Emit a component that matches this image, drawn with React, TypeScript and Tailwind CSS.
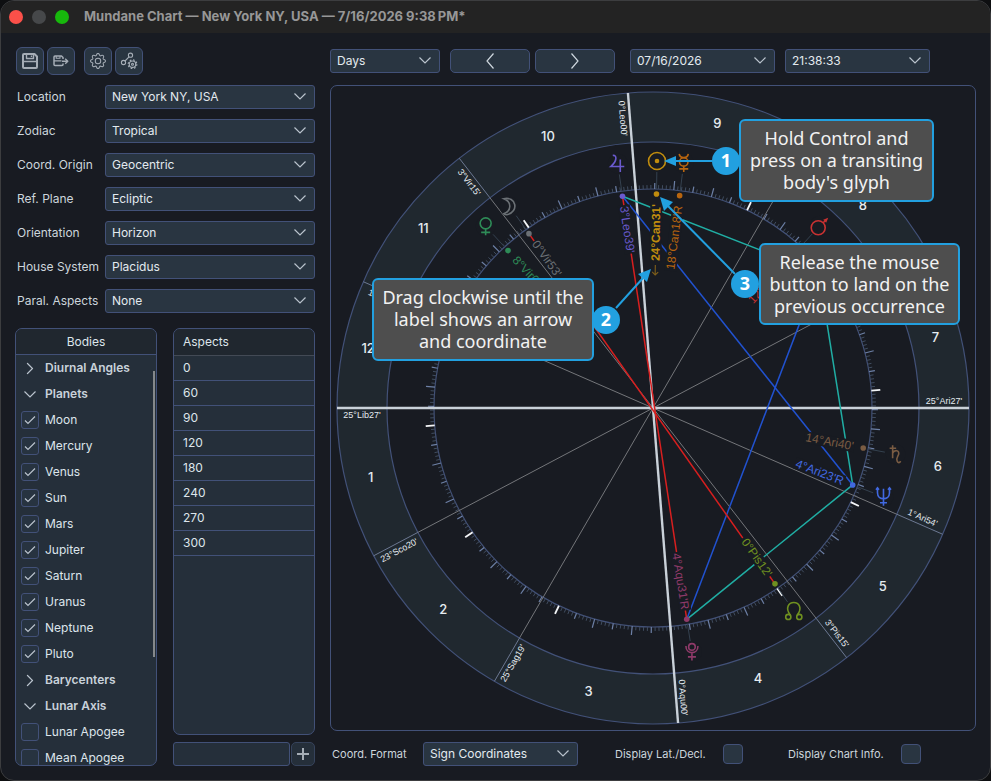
import React from "react";
import { BsGear } from "react-icons/bs";

/* ---------- shared form controls ---------- */

function Chevron({ className }: { className: string }) {
  return (
    <svg viewBox="0 0 12 7" className={className} fill="none" stroke="#b9c2cc" strokeWidth="1.2" aria-hidden="true">
      <path d="M0.5 0.5 L6 6 L11.5 0.5" />
    </svg>
  );
}

function Dropdown({ id, value, label, className }: { id: string; value: string; label?: string; className: string }) {
  return (
    <div className={`relative h-6 ${className}`}>
      <select
        id={id}
        aria-label={label}
        defaultValue={value}
        className="block h-6 w-full appearance-none rounded-[3px] border border-[#425178] bg-[#293541] pr-7 pl-[6px] text-[12px] text-[#e3eaef] outline-none"
      >
        <option>{value}</option>
      </select>
      <Chevron className="pointer-events-none absolute top-[8px] right-[9px] h-[7px] w-3" />
    </div>
  );
}

function IconButton({ label, children }: { label: string; children: React.ReactNode }) {
  return (
    <button
      type="button"
      aria-label={label}
      className="flex size-7 items-center justify-center rounded-[6px] border border-[#425178] bg-[#293541] text-[#a5adb6]"
    >
      {children}
    </button>
  );
}

/* ---------- left column ---------- */

const settings = [
  ["Location", "New York NY, USA"],
  ["Zodiac", "Tropical"],
  ["Coord. Origin", "Geocentric"],
  ["Ref. Plane", "Ecliptic"],
  ["Orientation", "Horizon"],
  ["House System", "Placidus"],
  ["Paral. Aspects", "None"],
];

type BodyRow = { name: string; kind: "closed" | "open" | "on" | "off" };

const bodyRows: BodyRow[] = [
  { name: "Diurnal Angles", kind: "closed" },
  { name: "Planets", kind: "open" },
  { name: "Moon", kind: "on" },
  { name: "Mercury", kind: "on" },
  { name: "Venus", kind: "on" },
  { name: "Sun", kind: "on" },
  { name: "Mars", kind: "on" },
  { name: "Jupiter", kind: "on" },
  { name: "Saturn", kind: "on" },
  { name: "Uranus", kind: "on" },
  { name: "Neptune", kind: "on" },
  { name: "Pluto", kind: "on" },
  { name: "Barycenters", kind: "closed" },
  { name: "Lunar Axis", kind: "open" },
  { name: "Lunar Apogee", kind: "off" },
  { name: "Mean Apogee", kind: "off" },
];

function BodyItem({ name, kind }: BodyRow) {
  if (kind === "closed" || kind === "open") {
    return (
      <li>
        <button
          type="button"
          aria-expanded={kind === "open"}
          className="flex h-[26px] w-full items-center gap-[6px] pl-[5px] text-left font-semibold text-[#c9d2da]"
        >
          <span className="flex size-[18px] items-center justify-center">
            <Chevron className={kind === "open" ? "h-[7px] w-3" : "h-[7px] w-3 -rotate-90"} />
          </span>
          {name}
        </button>
      </li>
    );
  }
  return (
    <li>
      <label className="flex h-[26px] items-center gap-[6px] pl-[5px]">
        <span className="relative flex size-[18px]">
          <input
            type="checkbox"
            defaultChecked={kind === "on"}
            className="peer size-[18px] appearance-none rounded-[3px] border border-[#425178] bg-[#273340]"
          />
          <svg
            viewBox="0 0 18 18"
            className="pointer-events-none absolute inset-0 hidden size-[18px] peer-checked:block"
            fill="none"
            stroke="#b9c2cc"
            strokeWidth="1.2"
            aria-hidden="true"
          >
            <path d="M4 9.5 L7 12.5 L14 5.5" />
          </svg>
        </span>
        {name}
      </label>
    </li>
  );
}

const aspectAngles = [0, 60, 90, 120, 180, 240, 270, 300];

function Sidebar() {
  return (
    <aside className="flex min-h-0 w-[300px] shrink-0 flex-col">
      <div className="mb-[10px] flex gap-[3px] pl-px">
        <IconButton label="Save chart">
          <svg viewBox="0 0 18 18" className="size-[18px]" fill="none" stroke="currentColor" strokeWidth="2" strokeLinejoin="round" aria-hidden="true">
            <path d="M3 2 H13.5 L16 4.5 V15 Q16 16 15 16 H3 Q2 16 2 15 V3 Q2 2 3 2 Z" />
            <path d="M2 9.5 H16" strokeWidth="1.6" />
            <path d="M5.5 2 V6.5 H12.5 V2" strokeWidth="1.4" />
            <path d="M10.5 3.5 V5" strokeWidth="1.4" />
          </svg>
        </IconButton>
        <IconButton label="Save chart as">
          <svg viewBox="0 0 18 18" className="size-[18px]" fill="none" stroke="currentColor" strokeWidth="1.5" strokeLinejoin="round" aria-hidden="true">
            <path d="M11 7 V5.5 L9.5 4 H3 Q2 4 2 5 V12.5 Q2 13.5 3 13.5 H10 Q11 13.5 11 12.5 V11.5" />
            <path d="M2 8.8 H9.5" strokeWidth="1.2" />
            <path d="M4.2 4 V6.3 H8 V4" strokeWidth="1.1" />
            <path d="M10 9.2 H15.5 M13.2 6.7 L15.8 9.2 L13.2 11.7" strokeWidth="1.4" />
          </svg>
        </IconButton>
        <div className="w-[3px]" />
        <IconButton label="Settings">
          <BsGear className="size-4" />
        </IconButton>
        <IconButton label="Aspect settings">
          <svg viewBox="0 0 18 18" className="size-[18px]" fill="none" stroke="currentColor" strokeWidth="1.1" aria-hidden="true">
            <circle cx="10.5" cy="3.2" r="2.1" />
            <circle cx="3.5" cy="10.5" r="2.1" />
            <path d="M9 4.8 L5 9" />
            <circle cx="12.5" cy="12.2" r="3.2" />
            <circle cx="12.5" cy="12.2" r="1" />
            <circle cx="12.5" cy="12.2" r="4.3" strokeDasharray="1.7 1.677" strokeWidth="1.2" />
          </svg>
        </IconButton>
      </div>

      <div className="flex flex-col gap-[10px] pl-px">
        {settings.map(([label, value], i) => (
          <div key={label} className="flex h-6 items-center">
            <label htmlFor={`setting-${i}`} className="w-[89px] shrink-0 pl-px text-[12px] text-[#ccd5dc]">
              {label}
            </label>
            <Dropdown id={`setting-${i}`} value={value} className="flex-1" />
          </div>
        ))}
      </div>

      <div className="mt-[15px] grid min-h-0 flex-1 grid-cols-2 gap-4">
        <section className="relative flex min-h-0 flex-col overflow-hidden rounded-[7px] border border-[#425178] bg-[#252f3a] text-[12px] text-[#dde5eb]">
          <h2 className="flex h-[26px] shrink-0 items-center justify-center border-b border-[#425178] bg-[#20272f] text-[12px]">Bodies</h2>
          <ul className="min-h-0 flex-1 overflow-hidden">
            {bodyRows.map((row) => (
              <BodyItem key={row.name} {...row} />
            ))}
          </ul>
          <div className="absolute top-[42px] right-px h-[286px] w-[2px] bg-[#85888a]" />
        </section>

        <div className="flex min-h-0 flex-col gap-[7px]">
          <section className="flex min-h-0 flex-1 flex-col overflow-hidden rounded-[7px] border border-[#425178] bg-[#252f3a] text-[12px] text-[#dde5eb]">
            <table className="w-full">
              <thead>
                <tr className="h-[26px] border-b border-[#434a55] bg-[#20272f]">
                  <th className="p-0 pl-[9px] text-left font-normal">Aspects</th>
                </tr>
              </thead>
              <tbody>
                {aspectAngles.map((angle) => (
                  <tr key={angle} className="h-[25px] border-b border-[#425178]">
                    <td className="p-0 pl-[9px]">{angle}</td>
                  </tr>
                ))}
              </tbody>
            </table>
          </section>
          <div className="flex gap-px">
            <input
              aria-label="New aspect angle"
              className="h-6 min-w-0 flex-1 rounded-[3px] border border-[#425178] bg-[#252f3a] px-2 text-[12px] text-[#d5dde4] outline-none"
            />
            <button
              type="button"
              aria-label="Add aspect"
              className="flex size-6 items-center justify-center rounded-[5px] border border-[#36435c] bg-[#252f3a]"
            >
              <svg viewBox="0 0 12 12" className="size-3" stroke="#a5adb6" strokeWidth="2" aria-hidden="true">
                <path d="M6 0 V12 M0 6 H12" />
              </svg>
            </button>
          </div>
        </div>
      </div>
    </aside>
  );
}

/* ---------- chart wheel (origin at its centre) ---------- */

const ASC = 205.45;
const R_OUTER = 316;
const R_RING = 266;
const R_TICK = 219;
const R_DOT = 214;

function screenAngle(lon: number) {
  return (((180 + lon - ASC) % 360) + 360) % 360;
}

function at(lon: number, r: number): [number, number] {
  const a = (screenAngle(lon) * Math.PI) / 180;
  return [r * Math.cos(a), -r * Math.sin(a)];
}

/* An empty label marks a cusp whose text is covered by a callout. */
const cusps: [number, string][] = [
  [205.45, "25°Lib27'"],
  [233.33, "23°Sco20'"],
  [265.32, "25°Sag19'"],
  [300, "0°Aqu00'"],
  [333.25, "3°Pis15'"],
  [361.9, "1°Ari54'"],
  [385.45, "25°Ari27'"],
  [413.33, ""],
  [445.32, ""],
  [480, "0°Leo00'"],
  [513.25, "3°Vir15'"],
  [541.9, "1°Lib54'"],
];

type Body = { name: string; lon: number; text: string; width: number; color: string; glyph: React.ReactNode };

const bodies: Body[] = [
  {
    name: "moon", lon: 150.88, text: "0°Vir53'", width: 44, color: "#6b7075",
    glyph: <path d="M-6 -8 C6 -11 10 5 -3 8 C-4 8 -5 8 -6 7 C2 4 2 -5 -6 -8 Z" />,
  },
  {
    name: "venus", lon: 158.1, text: "8°Vir06'", width: 44, color: "#2e8b57",
    glyph: <><circle cx="0" cy="-3" r="5.5" /><path d="M0 2.5 V9 M-4.5 6 H4.5" /></>,
  },
  {
    name: "jupiter", lon: 123.65, text: "3°Leo39'", width: 47, color: "#6a5acd",
    glyph: <path d="M-5 -8 C-1 -9 0 -3 -7 3 H6.5 M2.5 -4 V8.5" />,
  },
  {
    name: "sun", lon: 114.52, text: "24°Can31'", width: 56, color: "#c08c0e",
    glyph: <><circle cx="0" cy="0" r="8.5" /><circle cx="0" cy="0" r="1.5" fill="#c08c0e" /></>,
  },
  {
    name: "mercury", lon: 108.3, text: "18°Can18'R", width: 65, color: "#b8650f",
    glyph: <><path d="M-4.5 -9 C-4 -4 4 -4 4.5 -9 M0 3.5 V9 M-4.5 6 H4.5" /><circle cx="0" cy="-1" r="4.2" /></>,
  },
  {
    name: "mars", lon: 73, text: "12°Gem58'", width: 57, color: "#c83232",
    glyph: <><circle cx="-1.5" cy="2" r="7" /><path d="M3.5 -3 L7 -6.5" /><path d="M8.5 -8 L3.5 -6 L6.5 -3 Z" fill="#c83232" stroke="none" /></>,
  },
  {
    name: "saturn", lon: 14.67, text: "14°Ari40'", width: 49, color: "#7a5c43",
    glyph: <path d="M-3 -9 V4 M-6 -6 H0.5 M-3 -1 C-1 -5 4 -4 3 0 C2.5 2 0 4 1.5 7 C2.5 9 4 9 5 7" />,
  },
  {
    name: "neptune", lon: 4.38, text: "4°Ari23'R", width: 51, color: "#4169e1",
    glyph: <path d="M-6 -8 V-4 C-6 4 6 4 6 -4 V-8 M0 -8 V9 M-3.5 6 H3.5 M-7.5 -7 L-6 -9 L-4.5 -7 M4.5 -7 L6 -9 L7.5 -7" />,
  },
  {
    name: "pluto", lon: 304.52, text: "4°Aqu31'R", width: 57, color: "#8f3a69",
    glyph: <><circle cx="0" cy="-5" r="3.3" /><path d="M-6 -6 C-6 3 6 3 6 -6 M0 1 V8.5 M-4 5 H4" /></>,
  },
  {
    name: "node", lon: 330.2, text: "0°Pis12'", width: 45, color: "#6f9020",
    glyph: <><circle cx="-5.5" cy="6" r="2.6" /><circle cx="5.5" cy="6" r="2.6" /><path d="M-3.5 4 C-9 -3 -5 -8.5 0 -8.5 C5 -8.5 9 -3 3.5 4" /></>,
  },
];

const URANUS = 64.6;
const aspectLines: [number, number, string][] = [
  [123.65, 4.38, "#2152d0"],
  [304.52, URANUS, "#2152d0"],
  [123.65, URANUS, "#20aea4"],
  [URANUS, 4.38, "#20aea4"],
  [304.52, 4.38, "#20aea4"],
  [123.65, 304.52, "#d81f1f"],
  [150.88, 330.2, "#d81f1f"],
];

function Radial({ lon, from, to, stroke, width }: { lon: number; from: number; to: number; stroke: string; width: number }) {
  const [x1, y1] = at(lon, from);
  const [x2, y2] = at(lon, to);
  return <line x1={x1} y1={y1} x2={x2} y2={y2} stroke={stroke} strokeWidth={width} />;
}

function Ticks() {
  return (
    <g>
      {Array.from({ length: 360 }, (_, d) => {
        if (d % 30 === 0) return <Radial key={d} lon={d} from={R_TICK} to={R_TICK + 9} stroke="#f4f6f8" width={1.8} />;
        if (d % 10 === 0) return <Radial key={d} lon={d} from={R_TICK} to={R_TICK + 9} stroke="#6d80a6" width={1.2} />;
        if (d % 5 === 0) return <Radial key={d} lon={d} from={R_TICK} to={R_TICK + 6} stroke="#6d80a6" width={1.2} />;
        return <Radial key={d} lon={d} from={R_TICK} to={R_TICK + 4} stroke="#404d60" width={1} />;
      })}
    </g>
  );
}

function BodyLabel({ body }: { body: Body }) {
  const angle = screenAngle(body.lon);
  const left = angle > 90 && angle < 270;
  const turn = left ? 180 - angle : -angle;
  const start = left ? -204 : 204 - body.width;
  return (
    <g transform={`rotate(${turn})`}>
      <rect x={start - 1} y={-6} width={body.width + 2} height={12} fill="#181b22" />
      <text
        x={left ? -204 : 204}
        y={4}
        textAnchor={left ? "start" : "end"}
        fontSize="12"
        fontWeight={body.name === "sun" ? 700 : 400}
        fill={body.color}
      >
        {body.text}
      </text>
      {body.name === "sun" && (
        <path d="M143 0 H133 M136 -3 L133 0 L136 3" fill="none" stroke="#80601a" strokeWidth="1.1" />
      )}
    </g>
  );
}

function Wheel() {
  return (
    <svg
      viewBox="-322 -321 644 643"
      className="block h-[643px] w-[644px] font-['Liberation_Sans',Arial,sans-serif]"
      role="img"
      aria-label="Mundane chart wheel"
    >
      <circle r={(R_OUTER + R_RING) / 2} fill="none" stroke="#20282f" strokeWidth={R_OUTER - R_RING} />
      <circle r={R_OUTER} fill="none" stroke="#425178" strokeWidth="1.2" />
      <circle r={R_RING} fill="none" stroke="#425178" strokeWidth="1.2" />
      <circle r={R_TICK} fill="none" stroke="#425178" strokeWidth="1.2" />
      <Ticks />
      {cusps.map(([lon], i) =>
        i % 3 === 0 ? null : (
          <g key={lon}>
            <Radial lon={lon} from={0} to={R_RING} stroke="#74767a" width={1} />
            <Radial lon={lon} from={R_RING} to={R_OUTER} stroke="#6c7892" width={1} />
          </g>
        ),
      )}
      {cusps.map(([lon], i) =>
        i % 3 === 0 ? (
          <Radial key={lon} lon={lon} from={0} to={R_OUTER} stroke="#c9d1d9" width={2.4} />
        ) : null,
      )}

      {bodies.map((b) => {
        const [x, y] = at(b.lon, 247);
        return (
          <g key={b.name}>
            <Radial lon={b.lon} from={R_TICK} to={236} stroke="#34414f" width={1} />
            <g transform={`translate(${x} ${y})`} fill="none" stroke={b.color} strokeWidth="1.6">
              <circle r="10" fill="#181b22" stroke="none" />
              {b.glyph}
            </g>
          </g>
        );
      })}

      {aspectLines.map(([a, b, color], i) => {
        const [x1, y1] = at(a, R_DOT);
        const [x2, y2] = at(b, R_DOT);
        return <line key={i} x1={x1} y1={y1} x2={x2} y2={y2} stroke={color} strokeWidth="1.5" />;
      })}
      {bodies.map((b) => (
        <BodyLabel key={b.name} body={b} />
      ))}
      {bodies.map((b) => {
        const [x, y] = at(b.lon, R_DOT);
        return <circle key={b.name} cx={x} cy={y} r="2.8" fill={b.color} />;
      })}

      {cusps.map(([lon, text]) => {
        const angle = screenAngle(lon);
        const left = angle > 90 && angle < 270;
        return text ? (
          <text
            key={text}
            transform={`rotate(${left ? 180 - angle : -angle})`}
            x={left ? -291 : 291}
            y={left ? 10 : -4}
            textAnchor="middle"
            fontSize="9"
            fill="#e6ecf1"
          >
            {text}
          </text>
        ) : null;
      })}
      {cusps.map(([lon], i) => {
        const next = i === 11 ? 565.45 : cusps[i + 1][0];
        const [x, y] = at((lon + next) / 2, 291);
        return (
          <text
            key={i}
            x={x}
            y={y + 4}
            textAnchor="middle"
            className="font-['Inter',sans-serif] text-[13px] font-medium"
            fill="#e6ecf1"
          >
            {i + 1}
          </text>
        );
      })}

      <g stroke="#22a0e0" fill="#22a0e0" strokeWidth="2">
        <path d="M59 -247 H22" />
        <path d="M11 -247 L23 -252 L23 -242 Z" stroke="none" />
        <path d="M-37 -100 L-10 -130" />
        <path d="M-2 -139 L-6 -126 L-15 -134 Z" stroke="none" />
        <path d="M82 -134 L15 -202" />
        <path d="M7 -211 L20 -206 L11 -197 Z" stroke="none" />
      </g>
    </svg>
  );
}

/* ---------- tutorial callouts over the wheel ---------- */

function Badge({ n, className }: { n: number; className: string }) {
  return (
    <span
      className={`absolute flex size-7 items-center justify-center rounded-full bg-[#22a0e0] font-['Noto_Sans',sans-serif] text-[18px] font-bold text-white ${className}`}
    >
      {n}
    </span>
  );
}

function Callout({ lines, className }: { lines: string[]; className: string }) {
  return (
    <div
      className={`absolute flex flex-col items-center justify-center rounded-[6px] border-2 border-[#22a0e0] bg-[#4e4e4e] font-['Noto_Sans',sans-serif] text-[18px] leading-[22px] whitespace-nowrap text-[#f2f2f2] ${className}`}
    >
      {lines.map((line) => (
        <span key={line}>{line}</span>
      ))}
    </div>
  );
}

/* ---------- window ---------- */

export default function App() {
  return (
    <div className="h-screen bg-[#0e0f11] font-['Inter',sans-serif] text-[#d5dde4]">
      <div className="flex h-full flex-col overflow-hidden rounded-[14px] border border-[#3c3d3f] bg-[#181b22]">
        <header className="flex h-8 shrink-0 items-center bg-[#232323] pl-2">
          <div className="flex gap-[9px]">
            <button type="button" aria-label="Close" className="size-[14px] rounded-full bg-[#fb5049]" />
            <button type="button" aria-label="Minimize" className="size-[14px] rounded-full bg-[#46484a]" />
            <button type="button" aria-label="Zoom" className="size-[14px] rounded-full bg-[#17b80c]" />
          </div>
          <h1 className="ml-[15px] text-[13px] font-bold text-[#979797]">
            Mundane Chart — New York NY, USA — 7/16/2026 9:38{"\u202f"}PM*
          </h1>
        </header>

        <main className="flex min-h-0 flex-1 gap-[15px] px-[14px] pt-[14px] pb-[14px]">
          <Sidebar />

          <div className="flex min-w-0 flex-1 flex-col">
            <div className="mt-[2px] mb-3 flex">
              <Dropdown id="step" label="Time step" value="Days" className="w-[110px]" />
              <button type="button" aria-label="Previous" className="ml-[10px] flex h-6 w-20 items-center justify-center rounded-[5px] border border-[#425178] bg-[#293541]">
                <svg viewBox="0 0 8 16" className="h-4 w-2" fill="none" stroke="#ccd5dc" strokeWidth="1.2" aria-hidden="true">
                  <path d="M7.5 0.5 L1 8 L7.5 15.5" />
                </svg>
              </button>
              <button type="button" aria-label="Next" className="ml-[5px] flex h-6 w-20 items-center justify-center rounded-[5px] border border-[#425178] bg-[#293541]">
                <svg viewBox="0 0 8 16" className="h-4 w-2" fill="none" stroke="#ccd5dc" strokeWidth="1.2" aria-hidden="true">
                  <path d="M0.5 0.5 L7 8 L0.5 15.5" />
                </svg>
              </button>
              <Dropdown id="date" label="Date" value="07/16/2026" className="ml-[15px] w-[145px]" />
              <Dropdown id="time" label="Time" value="21:38:33" className="ml-[10px] w-[145px]" />
            </div>

            <section className="flex min-h-0 flex-1 items-center justify-center overflow-hidden rounded-[7px] border border-[#425178]">
              <div className="relative shrink-0">
                <Wheel />
                <Callout
                  className="top-[32px] left-[408px] h-[83px] w-[195px]"
                  lines={["Hold Control and", "press on a transiting", "body's glyph"]}
                />
                <Callout
                  className="top-[191px] left-[41px] h-[83px] w-[222px]"
                  lines={["Drag clockwise until the", "label shows an arrow", "and coordinate"]}
                />
                <Callout
                  className="top-[156px] left-[428px] h-[82px] w-[201px]"
                  lines={["Release the mouse", "button to land on the", "previous occurrence"]}
                />
                <Badge n={1} className="top-[60px] left-[381px]" />
                <Badge n={2} className="top-[219px] left-[261px]" />
                <Badge n={3} className="top-[183px] left-[400px]" />
              </div>
            </section>

            <div className="mt-[11px] flex h-6 items-center pl-[2px] text-[11px] text-[#ccd5dc]">
              <label htmlFor="format" className="w-[91px]">Coord. Format</label>
              <Dropdown id="format" value="Sign Coordinates" className="w-[155px]" />
              <label htmlFor="lat" className="ml-[37px] w-[108px]">Display Lat./Decl.</label>
              <input id="lat" type="checkbox" className="size-5 appearance-none rounded-[4px] border border-[#425178] bg-[#293541]" />
              <label htmlFor="info" className="ml-[45px] w-[113px]">Display Chart Info.</label>
              <input id="info" type="checkbox" className="size-5 appearance-none rounded-[4px] border border-[#425178] bg-[#293541]" />
            </div>
          </div>
        </main>
      </div>
    </div>
  );
}
